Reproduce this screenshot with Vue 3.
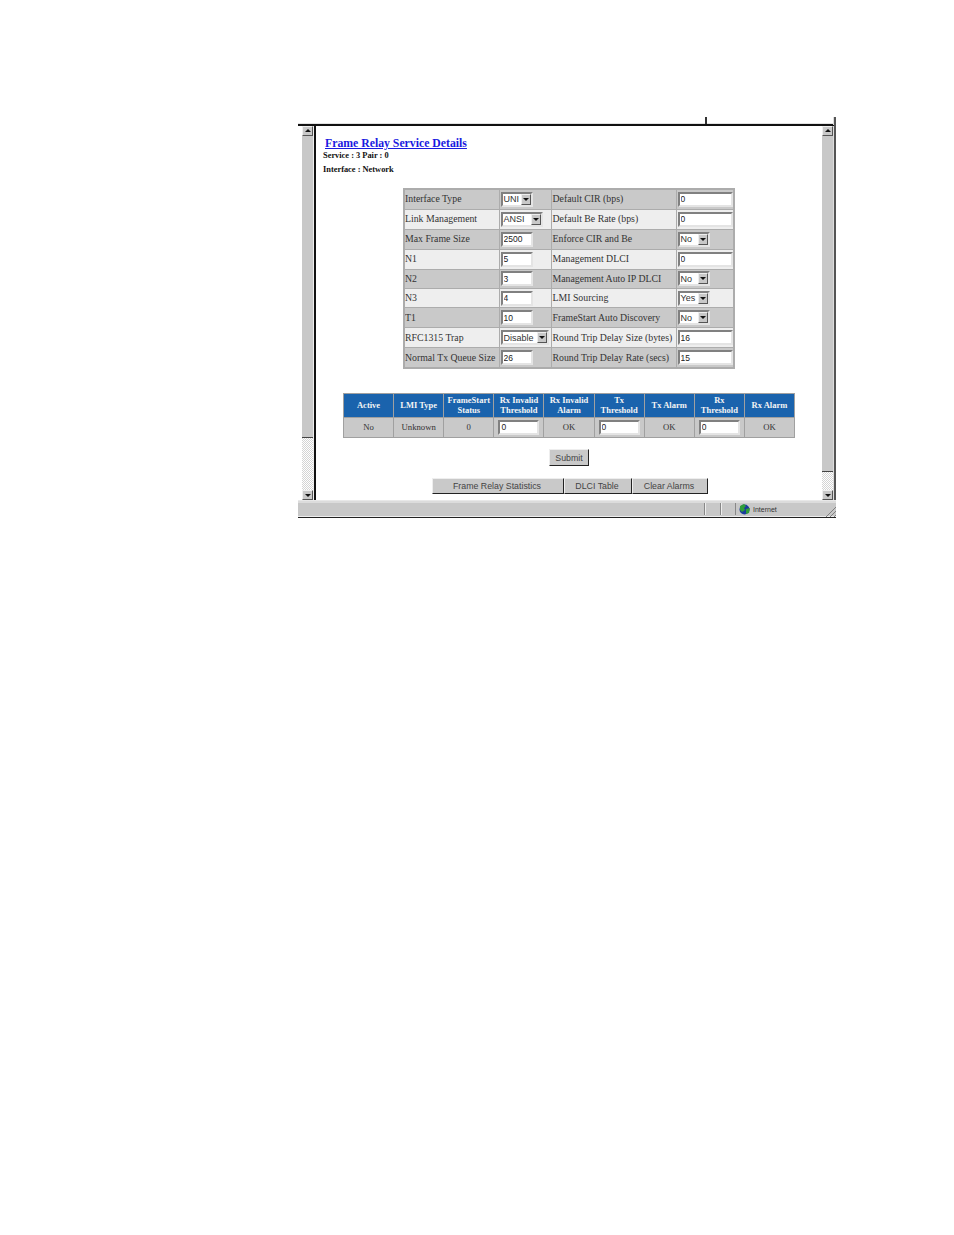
<script setup>
const settings = [
  { label: "Interface Type", ctl: "sel", val: "UNI", w: 32, label2: "Default CIR (bps)", ctl2: "in", val2: "0" },
  { label: "Link Management", ctl: "sel", val: "ANSI", w: 42, label2: "Default Be Rate (bps)", ctl2: "in", val2: "0" },
  { label: "Max Frame Size", ctl: "in", val: "2500", label2: "Enforce CIR and Be", ctl2: "sel", val2: "No" },
  { label: "N1", ctl: "in", val: "5", label2: "Management DLCI", ctl2: "in", val2: "0" },
  { label: "N2", ctl: "in", val: "3", label2: "Management Auto IP DLCI", ctl2: "sel", val2: "No" },
  { label: "N3", ctl: "in", val: "4", label2: "LMI Sourcing", ctl2: "sel", val2: "Yes" },
  { label: "T1", ctl: "in", val: "10", label2: "FrameStart Auto Discovery", ctl2: "sel", val2: "No" },
  { label: "RFC1315 Trap", ctl: "sel", val: "Disable", w: 48, label2: "Round Trip Delay Size (bytes)", ctl2: "in", val2: "16" },
  { label: "Normal Tx Queue Size", ctl: "in", val: "26", label2: "Round Trip Delay Rate (secs)", ctl2: "in", val2: "15" },
];
const heads = [
  ["Active"], ["LMI Type"], ["FrameStart", "Status"], ["Rx Invalid", "Threshold"], ["Rx Invalid", "Alarm"],
  ["Tx", "Threshold"], ["Tx Alarm"], ["Rx", "Threshold"], ["Rx Alarm"],
];
const status = ["No", "Unknown", "0", null, "OK", null, "OK", null, "OK"];
</script>

<template>
  <div class="page">
    <div class="tick"></div>
    <div class="edge"></div>
    <div class="window">
      <div class="scroll left">
        <div class="arrow up"></div>
        <div class="thumb thumb-left"></div>
        <div class="track"></div>
        <div class="arrow down"></div>
      </div>
      <div class="content">
        <a class="title" href="#">Frame Relay Service Details</a>
        <div class="sub">Service : 3 Pair : 0</div>
        <div class="sub second">Interface : Network</div>

        <table class="settings">
          <colgroup>
            <col style="width:95px" /><col style="width:52px" /><col style="width:125px" /><col style="width:58px" />
          </colgroup>
          <tr v-for="(r, i) in settings" :key="i" :class="i % 2 ? 'light' : 'dark'">
            <td class="lbl">{{ r.label }}</td>
            <td class="ctl">
              <div v-if="r.ctl === 'sel'" class="select" :style="{ width: r.w + 'px' }">
                <span>{{ r.val }}</span><i class="drop"></i>
              </div>
              <input v-else class="field small" :value="r.val" />
            </td>
            <td class="lbl third">{{ r.label2 }}</td>
            <td class="ctl right">
              <div v-if="r.ctl2 === 'sel'" class="select" style="width:32px">
                <span>{{ r.val2 }}</span><i class="drop"></i>
              </div>
              <input v-else class="field wide" :value="r.val2" />
            </td>
          </tr>
        </table>

        <table class="state">
          <tr class="head">
            <th v-for="(h, i) in heads" :key="i">
              <template v-for="(line, j) in h" :key="j">{{ line }}<br v-if="j < h.length - 1" /></template>
            </th>
          </tr>
          <tr class="vals">
            <td v-for="(s, i) in status" :key="i">
              <input v-if="s === null" class="field thresh" value="0" />
              <template v-else>{{ s }}</template>
            </td>
          </tr>
        </table>

        <div class="submit-row"><button class="btn submit">Submit</button></div>
        <div class="tabs">
          <button class="btn tab t1">Frame Relay Statistics</button>
          <button class="btn tab t2">DLCI Table</button>
          <button class="btn tab t3">Clear Alarms</button>
        </div>
      </div>
      <div class="scroll right-bar">
        <div class="arrow up"></div>
        <div class="thumb thumb-right"></div>
        <div class="track"></div>
        <div class="arrow down"></div>
      </div>
    </div>
    <div class="statusbar">
      <div class="grow"></div>
      <div class="panel p1"></div>
      <div class="panel p2"></div>
      <div class="zone">
        <svg width="11" height="11" viewBox="0 0 11 11">
          <circle cx="5.5" cy="5.5" r="5" fill="#1a3c9c" />
          <path d="M1 2 L5 0 L7 2 L5 4 L6 6 L3 8 L1 6 Z" fill="#2f9e3a" />
          <path d="M7 5 L11 4 L10 9 L7 10 Z" fill="#2f9e3a" />
        </svg>
        <span>Internet</span>
      </div>
      <svg class="grip" width="11" height="11" viewBox="0 0 11 11">
        <path d="M1 11 L11 1 M5 11 L11 5 M9 11 L11 9" stroke="#808080" stroke-width="1" fill="none" />
      </svg>
    </div>
  </div>
</template>

<style scoped>
.page {
  position: relative;
  width: 538px;
  margin-left: 298px;
  padding-top: 123px;
  font-family: "Liberation Serif", serif;
  color: #222;
}
.tick {
  position: absolute;
  left: 407px;
  top: 117px;
  width: 2px;
  height: 7px;
  background: #333;
}
.edge {
  position: absolute;
  right: 0;
  top: 117px;
  width: 3px;
  height: 8px;
  box-sizing: border-box;
  border-left: 1px solid #ddd;
  background: #555;
}
.window {
  display: flex;
  height: 374px;
  border-top: 1px solid #e2e2e2;
  box-shadow: inset 0 1px 0 #111, inset 0 2px 0 #111;
  padding: 2px 0 0 4px;
  border-right: 2px solid #555;
}
.scroll {
  width: 12px;
  flex: none;
  display: flex;
  flex-direction: column;
  box-sizing: border-box;
  border-right: 1px solid #eee;
}
.right-bar { margin-left: 1px; border-right-color: #ddd; }
.arrow {
  height: 10px;
  flex: none;
  background: #c8c8c8;
  border: 1px solid;
  border-color: #eee #555 #555 #eee;
  position: relative;
  box-sizing: border-box;
}
.arrow::after {
  content: "";
  position: absolute;
  left: 2px;
  border: 3px solid transparent;
}
.up::after { top: -1px; border-bottom-color: #111; }
.down::after { top: 3px; border-top-color: #111; }
.thumb {
  background: #c8c8c8;
  border-bottom: 1px solid #444;
  box-sizing: border-box;
}
.thumb-left { height: 302px; }
.thumb-right { height: 336px; }
.track {
  flex: 1;
  background: repeating-conic-gradient(#fff 0 25%, #d4d4d4 0 50%) 0 0 / 2px 2px;
}
.content {
  width: 506px;
  flex: none;
  background: #fff;
  border-left: 2px solid #111;
  margin-right: 1px;
  padding: 11px 0 0 0;
  box-sizing: border-box;
}
.title {
  display: block;
  margin-left: 9px;
  width: max-content;
  font-size: 11.75px;
  font-weight: bold;
  line-height: 14px;
  color: #1a1ae0;
}
.sub {
  margin: 0 0 0 7px;
  font-size: 8.4px;
  font-weight: bold;
  line-height: 10px;
  color: #111;
}
.second { margin-top: 4px; }
.settings {
  margin: 13px 0 0 87px;
  width: 330px;
  table-layout: fixed;
  border-collapse: collapse;
  border: 2px solid #acacac;
  font-size: 9.8px;
}
.settings td {
  height: 18.9px;
  border: 1px solid #acacac;
  white-space: nowrap;
  overflow: hidden;
  color: #333;
}
.settings tr:nth-child(6) td { height: 18px; }
.settings td.lbl { padding: 0 0 1px 0; height: 17.9px; }
.settings td.third { padding-left: 1px; }
.settings tr:nth-child(6) td.lbl { height: 17px; }
.dark td { background: #c9c9c9; }
.light td { background: #eeeeee; }
.settings td.ctl { padding: 0 0 0 1px; }
.field {
  display: block;
  box-sizing: border-box;
  height: 15px;
  padding: 0 0 0 1px;
  background: #fff;
  border: 2px solid;
  border-color: #808080 #e4e4e4 #e4e4e4 #808080;
  font: 8.5px "Liberation Sans", sans-serif;
  color: #222;
  outline: none;
}
.small { width: 32px; }
.wide { width: 55px; }
.thresh { width: 41px; margin: 0 auto; }
.select {
  display: flex;
  align-items: center;
  justify-content: space-between;
  box-sizing: border-box;
  height: 15px;
  background: #fff;
  border: 2px solid;
  border-color: #808080 #e4e4e4 #e4e4e4 #808080;
  font: 9px "Liberation Sans", sans-serif;
  color: #333;
  padding-left: 1px;
}
.drop {
  position: relative;
  width: 10px;
  height: 11px;
  flex: none;
  box-sizing: border-box;
  background: #c8c8c8;
  border: 1px solid;
  border-color: #eee #555 #555 #eee;
}
.drop::after {
  content: "";
  position: absolute;
  left: 1px;
  top: 3px;
  border: 3px solid transparent;
  border-top-color: #111;
}
.state {
  margin: 24px 0 0 27px;
  width: 452px;
  table-layout: fixed;
  border-collapse: collapse;
  border: 1px solid #a0a0a0;
  font-size: 8.7px;
}
.state th, .state td {
  border: 1px solid #a0a0a0;
  padding: 0 0 1px;
  text-align: center;
}
.head th {
  height: 22px;
  background: #1a63ad;
  color: #f4f4f4;
  font-weight: bold;
  font-size: 8.5px;
  line-height: 10px;
  white-space: nowrap;
}
.vals td {
  height: 18px;
  background: #c9c9c9;
  color: #333;
}
.btn {
  display: block;
  padding: 0;
  background: #c9c9c9;
  border: 1px solid;
  border-color: #eee #222 #222 #eee;
  font: 8.8px "Liberation Sans", sans-serif;
  color: #444;
  box-sizing: border-box;
}
.submit-row { display: flex; margin: 11px 0 0 233px; }
.submit { width: 40px; height: 17px; }
.tabs { display: flex; margin: 12px 0 0 116px; }
.tab { height: 16px; padding-right: 2px; }
.t1 { width: 132px; }
.t2 { width: 68px; }
.t3 { width: 76px; }
.statusbar {
  display: flex;
  align-items: center;
  height: 18px;
  background: #c8c8c8;
  border-top: 1px solid #e8e8e8;
  border-bottom: 1px solid #222;
  box-shadow: inset 0 -1px 0 #eee, inset 0 2px 0 #dcdcdc;
  box-sizing: border-box;
  font: 7px "Liberation Sans", sans-serif;
  color: #333;
}
.grow { flex: 1; }
.panel {
  height: 12px;
  border-left: 1px solid #888;
  box-shadow: inset 1px 0 0 #eee;
  box-sizing: border-box;
  flex: none;
}
.p1 { width: 16px; }
.p2 { width: 15px; }
.zone {
  display: flex;
  align-items: center;
  gap: 3px;
  width: 90px;
  height: 12px;
  padding-left: 3px;
  border-left: 1px solid #888;
  box-sizing: border-box;
  flex: none;
}
.grip { flex: none; align-self: flex-end; }
</style>
